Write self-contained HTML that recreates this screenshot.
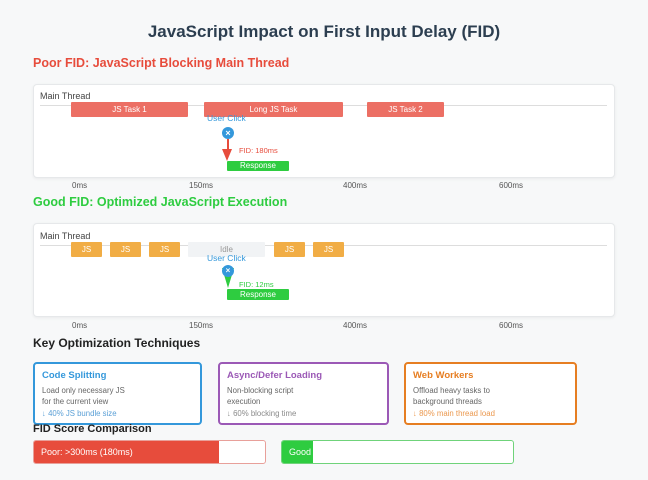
<!DOCTYPE html>
<html><head><meta charset="utf-8"><style>
*{margin:0;padding:0;box-sizing:border-box}
body{width:648px;height:480px;background:#f7f8f9;font-family:"Liberation Sans",sans-serif;position:relative;overflow:hidden}
.a{position:absolute;white-space:nowrap}
.panel{position:absolute;left:33px;width:582px;height:94px;background:#fff;border:1px solid #e6e8ea;border-radius:4px;box-shadow:0 1px 3px rgba(0,0,0,.06)}
.t{position:absolute;height:15px;color:#fff;font-size:8px;line-height:15px;text-align:center;border-radius:1px}
.r{background:#ec6f64}.o{background:#f1ad45}
.ax{font-size:8px;color:#555}
.card{position:absolute;top:362px;height:63px;background:#fff;border:2px solid;border-radius:4px;padding:6px 7px}
.card b{display:block;font-size:9.5px;margin-bottom:4px}
.card p{font-size:7.8px;color:#666;line-height:11px}
.card i{font-style:normal;font-size:7.8px;display:block;margin-top:2px}
</style></head><body>
<div class="a" style="left:0;width:648px;top:22px;text-align:center;font-size:17px;font-weight:bold;color:#2c3e50">JavaScript Impact on First Input Delay (FID)</div>
<div class="a" style="left:33px;top:56px;font-size:12.5px;font-weight:bold;color:#e74c3c">Poor FID: JavaScript Blocking Main Thread</div>
<div class="panel" style="top:84px"></div>
<div class="a" style="left:40px;top:91px;font-size:9px;color:#444">Main Thread</div>
<div class="a" style="left:40px;top:105px;width:567px;height:1px;background:#ddd"></div>
<div class="t r" style="left:71px;top:102px;width:117px">JS Task 1</div>
<div class="t r" style="left:204px;top:102px;width:139px">Long JS Task</div>
<div class="t r" style="left:367px;top:102px;width:77px">JS Task 2</div>
<div class="a" style="left:207px;top:113px;font-size:8.5px;color:#3498db">User Click</div>
<div class="a" style="left:222px;top:127px;width:12px;height:12px;border-radius:50%;background:#3498db;color:#fff;font-size:9px;line-height:12px;text-align:center;font-weight:bold">×</div>
<div class="a" style="left:227px;top:139px;width:1.5px;height:15px;background:#e74c3c"></div>
<div class="a" style="left:222px;top:149px;width:0;height:0;border-left:5px solid transparent;border-right:5px solid transparent;border-top:12px solid #e74c3c"></div>
<div class="a" style="left:239px;top:146px;font-size:7.5px;color:#e74c3c">FID: 180ms</div>
<div class="t" style="left:227px;top:161px;width:62px;height:10px;line-height:10px;background:#2ecc40">Response</div>
<div class="a ax" style="left:72px;top:181px">0ms</div><div class="a ax" style="left:189px;top:181px">150ms</div><div class="a ax" style="left:343px;top:181px">400ms</div><div class="a ax" style="left:499px;top:181px">600ms</div>

<div class="a" style="left:33px;top:195px;font-size:12.5px;font-weight:bold;color:#2ecc40">Good FID: Optimized JavaScript Execution</div>
<div class="panel" style="top:223px"></div>
<div class="a" style="left:40px;top:231px;font-size:9px;color:#444">Main Thread</div>
<div class="a" style="left:40px;top:245px;width:567px;height:1px;background:#ddd"></div>
<div class="t o" style="left:71px;top:242px;width:31px">JS</div>
<div class="t o" style="left:110px;top:242px;width:31px">JS</div>
<div class="t o" style="left:149px;top:242px;width:31px">JS</div>
<div class="t" style="left:188px;top:242px;width:77px;background:#f1f3f5;color:#999">Idle</div>
<div class="t o" style="left:274px;top:242px;width:31px">JS</div>
<div class="t o" style="left:313px;top:242px;width:31px">JS</div>
<div class="a" style="left:207px;top:253px;font-size:8.5px;color:#3498db">User Click</div>
<div class="a" style="left:222px;top:268px;width:0;height:0;border-left:6px solid transparent;border-right:6px solid transparent;border-top:20px solid #2ecc40"></div>
<div class="a" style="left:222px;top:265px;width:12px;height:12px;border-radius:50%;background:#3498db;color:#fff;font-size:8px;line-height:12px;text-align:center;font-weight:bold">×</div>
<div class="a" style="left:239px;top:280px;font-size:7.5px;color:#2ecc40">FID: 12ms</div>
<div class="t" style="left:227px;top:289px;width:62px;height:11px;line-height:11px;background:#2ecc40">Response</div>
<div class="a ax" style="left:72px;top:321px">0ms</div><div class="a ax" style="left:189px;top:321px">150ms</div><div class="a ax" style="left:343px;top:321px">400ms</div><div class="a ax" style="left:499px;top:321px">600ms</div>

<div class="a" style="left:33px;top:336px;font-size:12px;font-weight:bold;color:#222">Key Optimization Techniques</div>
<div class="card" style="left:33px;width:169px;border-color:#3498db"><b style="color:#3498db">Code Splitting</b><p>Load only necessary JS<br>for the current view</p><i style="color:#5a9fd6">↓ 40% JS bundle size</i></div>
<div class="card" style="left:218px;width:171px;border-color:#9b59b6"><b style="color:#9b59b6">Async/Defer Loading</b><p>Non-blocking script<br>execution</p><i style="color:#8a8a8a">↓ 60% blocking time</i></div>
<div class="card" style="left:404px;width:173px;border-color:#e67e22"><b style="color:#e67e22">Web Workers</b><p>Offload heavy tasks to<br>background threads</p><i style="color:#eb984e">↓ 80% main thread load</i></div>

<div class="a" style="left:33px;top:423px;font-size:11px;font-weight:bold;color:#222">FID Score Comparison</div>
<div class="a" style="left:33px;top:440px;width:233px;height:24px;background:#fff;border:1px solid #e8a09a;border-radius:3px;overflow:hidden"><div style="width:185px;height:100%;background:#e74c3c;color:#fff;font-size:9px;line-height:22px;padding-left:7px">Poor: &gt;300ms (180ms)</div></div>
<div class="a" style="left:281px;top:440px;width:233px;height:24px;background:#fff;border:1px solid #6fd37a;border-radius:3px;overflow:hidden"><div style="width:31px;height:100%;background:#2ecc40;color:#fff;font-size:9px;line-height:22px;padding-left:7px;overflow:hidden">Good</div></div>
</body></html>
